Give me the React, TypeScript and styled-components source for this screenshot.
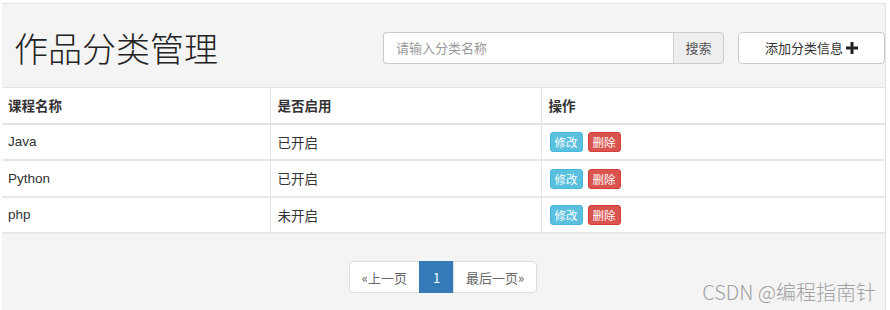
import React from "react";
import styled, { createGlobalStyle } from "styled-components";

const Global = createGlobalStyle`
  html, body { margin: 0; padding: 0; background: #fff; }
  body {
    font-family: "Liberation Sans", Arial, "Noto Sans CJK SC", sans-serif;
    font-size: 14px;
    color: #333;
  }
  * { box-sizing: border-box; }
`;

const Page = styled.div`
  width: 890px;
  height: 310px;
  padding: 3px 4px 0 2px;
  overflow: hidden;
`;

const Panel = styled.div`
  position: relative;
  height: 307px;
  background: #f4f4f4;
  border-top: 1px solid #e2e2e2;
  border-right: 1px solid #e2e2e2;
  display: flex;
  flex-direction: column;
`;

const Header = styled.div`
  height: 83px;
  display: flex;
  align-items: center;
  padding: 0 0 0 12px;
`;

const Title = styled.h1`
  margin: 0;
  font-family: "Noto Sans CJK SC", sans-serif;
  font-weight: 300;
  font-size: 34px;
  color: #222;
  flex: 1;
  padding-top: 4px;
`;

const SearchGroup = styled.div`
  display: flex;
  height: 32px;
  margin-right: 14px;
  margin-top: 4px;
`;

const SearchInput = styled.input`
  width: 290px;
  height: 32px;
  border: 1px solid #ccc;
  border-right: none;
  border-radius: 4px 0 0 4px;
  padding: 0 12px;
  font-family: "Noto Sans CJK SC", sans-serif;
  font-size: 13px;
  color: #555;
  background: #fff;
  outline: none;
  &::placeholder { color: #999; }
`;

const SearchButton = styled.button`
  width: 51px;
  height: 32px;
  border: 1px solid #ccc;
  border-radius: 0 4px 4px 0;
  background: #eee;
  font-family: "Noto Sans CJK SC", sans-serif;
  font-size: 13px;
  color: #555;
  padding: 0;
`;

const AddButton = styled.button`
  width: 147px;
  height: 32px;
  margin-top: 4px;
  border: 1px solid #ccc;
  border-radius: 4px;
  background: #fff;
  font-family: "Noto Sans CJK SC", sans-serif;
  font-size: 13px;
  color: #333;
  display: flex;
  align-items: center;
  justify-content: center;
  gap: 3px;
  padding: 0;
`;

const Table = styled.table`
  width: 100%;
  border-collapse: collapse;
  background: #fff;
  table-layout: fixed;
`;

const Th = styled.th<{ $w?: number }>`
  ${(p) => (p.$w ? `width: ${p.$w}px;` : "")}
  height: 36px;
  text-align: left;
  padding: 0 7px;
  font-family: "Noto Sans CJK SC", sans-serif;
  font-weight: 700;
  font-size: 13.5px;
  color: #333;
  border-top: 1px solid #e4e4e4;
  border-bottom: 2px solid #e4e4e4;
  border-left: 1px solid #e4e4e4;
  &:first-child { border-left: none; padding-left: 6px; }
`;

const Td = styled.td`
  height: 36.5px;
  padding: 0 7px;
  font-family: "Liberation Sans", Arial, "Noto Sans CJK SC", sans-serif;
  font-size: 13.5px;
  color: #333;
  border-bottom: 2px solid #e8e8e8;
  border-left: 1px solid #e4e4e4;
  &:first-child { border-left: none; padding-left: 6px; }
`;

const Actions = styled.div`
  display: flex;
  gap: 5px;
  padding-left: 1px;
  padding-top: 1px;
`;

const SmallButton = styled.button<{ $kind: "info" | "danger" }>`
  height: 20px;
  padding: 0 4px;
  border-radius: 3px;
  border: 1px solid ${(p) => (p.$kind === "info" ? "#46b8da" : "#d43f3a")};
  background: ${(p) => (p.$kind === "info" ? "#5bc0de" : "#d9534f")};
  color: #fff;
  font-family: "Noto Sans CJK SC", sans-serif;
  font-size: 11.5px;
  line-height: 18px;
`;

const Footer = styled.div`
  display: flex;
  justify-content: center;
  padding-top: 27px;
`;

const Pager = styled.ul`
  display: flex;
  margin: 0;
  padding: 0;
  list-style: none;
`;

const PageItem = styled.li<{ $active?: boolean; $pos?: "first" | "last" }>`
  height: 32px;
  display: flex;
  align-items: center;
  padding: 0 ${(p) => (p.$active ? "13px" : "12px")};
  font-family: "Noto Sans CJK SC", sans-serif;
  font-size: 13px;
  color: ${(p) => (p.$active ? "#fff" : "#666")};
  background: ${(p) => (p.$active ? "#337ab7" : "#fff")};
  border: 1px solid ${(p) => (p.$active ? "#337ab7" : "#ddd")};
  margin-left: -1px;
  border-radius: ${(p) =>
    p.$pos === "first" ? "4px 0 0 4px" : p.$pos === "last" ? "0 4px 4px 0" : "0"};
`;

const Watermark = styled.div`
  position: absolute;
  right: 9px;
  bottom: 4px;
  font-family: "Noto Sans CJK SC", sans-serif;
  font-weight: 300;
  font-size: 20px;
  color: #a0a0a0;
`;

const Plus = () => (
  <svg width="12" height="12" viewBox="0 0 12 12">
    <path d="M4.5 0h3v4.5H12v3H7.5V12h-3V7.5H0v-3h4.5z" fill="#222" />
  </svg>
);

const rows = [
  { name: "Java", status: "已开启" },
  { name: "Python", status: "已开启" },
  { name: "php", status: "未开启" },
];

export default function App() {
  return (
    <>
      <Global />
      <Page>
        <Panel>
          <Header>
            <Title>作品分类管理</Title>
            <SearchGroup>
              <SearchInput placeholder="请输入分类名称" />
              <SearchButton>搜索</SearchButton>
            </SearchGroup>
            <AddButton>
              添加分类信息 <Plus />
            </AddButton>
          </Header>
          <Table>
            <thead>
              <tr>
                <Th $w={268}>课程名称</Th>
                <Th $w={271}>是否启用</Th>
                <Th>操作</Th>
              </tr>
            </thead>
            <tbody>
              {rows.map((r) => (
                <tr key={r.name}>
                  <Td>{r.name}</Td>
                  <Td>{r.status}</Td>
                  <Td>
                    <Actions>
                      <SmallButton $kind="info">修改</SmallButton>
                      <SmallButton $kind="danger">删除</SmallButton>
                    </Actions>
                  </Td>
                </tr>
              ))}
            </tbody>
          </Table>
          <Footer>
            <Pager>
              <PageItem $pos="first">«上一页</PageItem>
              <PageItem $active>1</PageItem>
              <PageItem $pos="last">最后一页»</PageItem>
            </Pager>
          </Footer>
          <Watermark>CSDN @编程指南针</Watermark>
        </Panel>
      </Page>
    </>
  );
}
